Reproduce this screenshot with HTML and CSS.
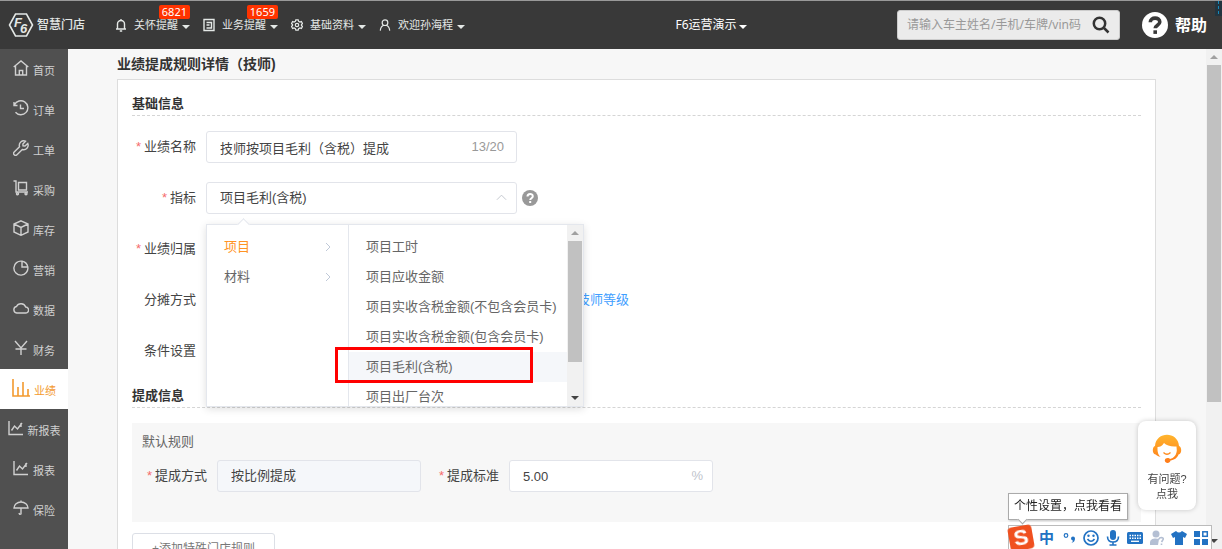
FILE: index.html
```html
<!DOCTYPE html>
<html lang="zh-CN">
<head>
<meta charset="utf-8">
<meta name="viewport" content="width=device-width, initial-scale=1">
<title>业绩提成规则详情</title>
<link rel="stylesheet" href="styles.css">
</head>
<body>
<div class="app">
  <header class="topbar">
    <a class="brand" href="#">
      <svg class="brand-mark" viewBox="0 0 26 26" aria-hidden="true"><path d="M7.500 2H18.500L24.500 13L18.500 24H7.500L1.500 13Z" fill="none" stroke="currentColor" stroke-width="1.600"/><text x="6" y="14.500" class="brand-letter">F</text><text x="12" y="20.500" class="brand-letter">6</text></svg>
      <span>智慧门店</span>
    </a>
    <nav class="topnav">
      <button class="topnav-item" type="button">
        <svg class="icon-bell" viewBox="0 0 12 14"><path d="M1 11H11M2.500 11V6a3.500 3.500 0 0 1 7 0V11M6 2.500V1M4.800 13H7.200"/></svg>
        关怀提醒<i class="caret"></i><span class="badge">6821</span>
      </button>
      <button class="topnav-item" type="button">
        <svg class="icon-note" viewBox="0 0 12 14"><path d="M1 1.500H11V12.500H1ZM3.500 4.500H8.500V10H3.500M3.500 7H6.500"/></svg>
        业务提醒<i class="caret"></i><span class="badge">1659</span>
      </button>
      <button class="topnav-item" type="button">
        <svg class="icon-gear" viewBox="0 0 14 14"><path d="M5.600 1H8.400L8.900 2.700L10.400 3.500L12.100 3L13.400 5.300L12.200 6.500V7.500L13.400 8.700L12.100 11L10.400 10.500L8.900 11.300L8.400 13H5.600L5.100 11.300L3.600 10.500L1.900 11L.6 8.700L1.800 7.500V6.500L.6 5.300L1.900 3L3.600 3.500L5.100 2.700Z"/><circle cx="7" cy="7" r="2"/></svg>
        基础资料<i class="caret"></i>
      </button>
      <button class="topnav-item" type="button">
        <svg class="icon-user" viewBox="0 0 14 14"><circle cx="7" cy="4.300" r="3.300"/><path d="M1.500 13.500Q2 8.500 5.500 7.300M8.500 7.300Q12 8.500 12.500 13.500"/></svg>
        欢迎孙海程<i class="caret"></i>
      </button>
    </nav>
    <button class="store" type="button">F6运营演示<i class="caret"></i></button>
    <form class="search">
      <input type="text" aria-label="搜索" placeholder="请输入车主姓名/手机/车牌/vin码">
      <button type="button" aria-label="查询"><svg viewBox="0 0 18 18"><circle cx="7.500" cy="7.500" r="5.700"/><path d="M12 12L16.500 16.500"/></svg></button>
    </form>
    <a class="help" href="#"><svg viewBox="0 0 26 26" aria-hidden="true"><circle cx="13" cy="13" r="13" fill="#fff"/><path d="M8.300 10.200C8.300 4.800 17.800 4.800 17.800 10C17.800 13 13.200 13.300 13.200 16.200" fill="none" stroke="#393939" stroke-width="3.600"/><rect x="11.400" y="18.300" width="3.600" height="3.600" fill="#393939"/></svg>帮助</a>
    <span class="edge-tab"></span>
  </header>

  <div class="workspace">
    <nav class="sidebar">
      <a href="#"><svg viewBox="0 0 16 16"><path d="M.7 7L8 1L15.300 7M2.500 6V15H13.500V6M6.300 15V10.500H9.700V15"/></svg>首页</a>
      <a href="#"><svg viewBox="0 0 16 16"><path d="M1.500 4.800A7 7 0 1 1 2.500 12.300M1 2V5.500H4.500M7.500 4.500V8.500H11"/></svg>订单</a>
      <a href="#"><svg viewBox="0 0 16 16"><path d="M12.500 1.200A4.500 4.500 0 0 0 6.500 6.700L1.200 12A1.900 1.900 0 0 0 4 14.800L9.300 9.500A4.500 4.500 0 0 0 14.800 3.500L12 6L10 5.800L9.900 4Z"/></svg>工单</a>
      <a href="#"><svg viewBox="0 0 16 16"><path d="M.5 1H3V12H15M5.500 2.500H13.500V10H5.500Z"/><circle cx="4.500" cy="13.700" r="1"/><circle cx="13" cy="13.700" r="1"/></svg>采购</a>
      <a href="#"><svg viewBox="0 0 16 16"><path d="M8 .8L15 4V12L8 15.300L1 12V4ZM1 4L8 7.500L15 4M8 7.500V15"/></svg>库存</a>
      <a href="#"><svg viewBox="0 0 16 16"><path d="M9 1.200V7H14.800A7 7 0 1 1 9 1.200A7 7 0 0 1 14.800 7"/></svg>营销</a>
      <a href="#"><svg viewBox="0 0 16 16"><path d="M3.700 13H12.500A3 3 0 0 0 12.700 7A5 5 0 0 0 3.500 6.500A3.300 3.300 0 0 0 3.700 13Z"/></svg>数据</a>
      <a href="#"><svg viewBox="0 0 16 16"><path d="M2 1L8 8L14 1M8 8V15M2.500 9H13.500"/></svg>财务</a>
      <a href="#" class="active" aria-current="page"><svg class="wide" viewBox="0 0 18 18"><path d="M1 0V17H18M6 17V8M11 17V3M16 17V10"/></svg>业绩</a>
      <a href="#"><svg viewBox="0 0 16 16"><path d="M1 1V14.500H15M3.500 10.500L6.500 6L9.500 9L14 3M13 7V3"/></svg>新报表</a>
      <a href="#"><svg viewBox="0 0 16 16"><path d="M1 1V14.500H15M3.500 10.500L6.500 6L9.500 9L14 3M13 7V3"/></svg>报表</a>
      <a href="#"><svg viewBox="0 0 16 16"><path d="M1 8A7 6 0 0 1 15 8ZM8 2V.5M8 8V14Q6.500 15 6 13"/></svg>保险</a>
    </nav>

    <main class="content">
      <h1>业绩提成规则详情（技师)</h1>
      <section class="card">
        <h2>基础信息</h2>
        <div class="fields">
          <div class="field">
            <label class="required" for="name">业绩名称</label>
            <div class="control"><input id="name" type="text" value="技师按项目毛利（含税）提成"><span class="suffix count">13/20</span></div>
          </div>
          <div class="field">
            <label class="required" for="metric">指标</label>
            <div class="control">
              <select id="metric"><option>项目毛利(含税)</option></select>
              <svg class="suffix chevron" viewBox="0 0 12 8"><path d="M1 7L6 2L11 7"/></svg>
              <div class="cascader">
                <ul class="groups">
                  <li><button type="button" class="chosen">项目<svg viewBox="0 0 6 10"><path d="M1 1L5 5L1 9"/></svg></button></li>
                  <li><button type="button">材料<svg viewBox="0 0 6 10"><path d="M1 1L5 5L1 9"/></svg></button></li>
                </ul>
                <ul class="choices">
                  <li><button type="button">项目工时</button></li>
                  <li><button type="button">项目应收金额</button></li>
                  <li><button type="button">项目实收含税金额(不包含会员卡)</button></li>
                  <li><button type="button">项目实收含税金额(包含会员卡)</button></li>
                  <li><button type="button" class="hovered">项目毛利(含税)</button></li>
                  <li><button type="button">项目出厂台次</button></li>
                </ul>
                <div class="scrollbar"><i class="up"></i><span class="thumb"></span><i class="down"></i></div>
                <span class="marker"></span>
              </div>
            </div>
            <button class="hint" type="button" aria-label="说明"><svg viewBox="0 0 16 16"><circle cx="8" cy="8" r="8" fill="#999"/><path d="M5.500 6.500C5.500 3.200 10.800 3.200 10.800 6.300C10.800 8.200 8.200 8.200 8.200 10" fill="none" stroke="#fff" stroke-width="2"/><rect x="7.200" y="11" width="2" height="2" fill="#fff"/></svg></button>
          </div>
          <div class="field"><span class="label required">业绩归属</span></div>
          <div class="field"><span class="label">分摊方式</span><a class="level-link" href="#">技师等级</a></div>
          <div class="field"><span class="label">条件设置</span></div>
        </div>

        <h2>提成信息</h2>
        <div class="rule">
          <h3>默认规则</h3>
          <div class="rule-row">
            <div class="field">
              <label class="required" for="mode">提成方式</label>
              <div class="control"><select id="mode" disabled><option>按比例提成</option></select></div>
            </div>
            <div class="field">
              <label class="required" for="rate">提成标准</label>
              <div class="control"><input id="rate" type="text" value="5.00"><span class="suffix percent">%</span></div>
            </div>
          </div>
        </div>
        <button class="add" type="button">+添加特殊门店规则</button>
      </section>
    </main>
    <div class="scrollbar page-scroll"><i class="up"></i><span class="thumb"></span><i class="down"></i></div>
  </div>
</div>

<button class="support" type="button">
  <svg viewBox="0 0 30 30" aria-hidden="true"><defs><linearGradient id="hair" x1="0" y1="0" x2="0" y2="1"><stop offset="0" stop-color="#ffb52e"/><stop offset="1" stop-color="#ff7a18"/></linearGradient></defs><path d="M3 12C4 -3 26 -3 27 12C30 13 30 20 26.500 20.500C25.500 24 22 26 18.500 26.500C18 30 12.500 29.500 12.800 26.300C13 23.500 17 23.500 18 25C22 24 24.500 21 24.800 16.500L24.500 12.500C19 13 14.500 11.500 12 9C10 12 8 13 5.500 13V16C5.700 19 6.500 21 8.500 23C5 22 4 20.500 3.500 20.500C0 20 0 13 3 12Z" fill="url(#hair)"/><path d="M11.500 18.500Q15 22 18.500 18.500" fill="none" stroke="#ff8a1c" stroke-width="1.300"/></svg>
  <span>有问题?</span><span>点我</span>
</button>
<div class="ime-tip">个性设置，点我看看</div>
<div class="ime">
  <span class="ime-logo">S</span>
  <span class="ime-lang">中</span>
  <svg viewBox="0 0 16 16"><circle cx="5" cy="5.500" r="1.800" fill="none" stroke="currentColor" stroke-width="1.200"/><path d="M10 8.500a2 2 0 1 1 4 0Q14 12 10.500 13Q12 11.500 11.800 10.500Q10 10 10 8.500Z" fill="currentColor"/></svg>
  <svg viewBox="0 0 16 16"><g fill="none" stroke="currentColor" stroke-width="1.700"><circle cx="8" cy="8" r="7"/><path d="M4.500 9Q8 13.500 11.500 9"/></g><circle cx="5.500" cy="5.700" r="1.200" fill="currentColor"/><circle cx="10.500" cy="5.700" r="1.200" fill="currentColor"/></svg>
  <svg viewBox="0 0 16 16"><rect x="5" y="0" width="6" height="10" rx="3" fill="currentColor"/><path d="M2.500 6.500Q2.500 12 8 12Q13.500 12 13.500 6.500M8 12V15M4.500 15H11.500" fill="none" stroke="currentColor" stroke-width="1.600"/></svg>
  <svg viewBox="0 0 16 16"><rect x="0" y="2" width="16" height="12" rx="1.500" fill="currentColor"/><path d="M2.500 5.500H14M2.500 8.200H14" stroke="#fff" stroke-width="1.400" stroke-dasharray="1.500 1"/><path d="M4 11.300H12" stroke="#fff" stroke-width="1.300"/></svg>
  <svg class="muted" viewBox="0 0 16 16"><circle cx="7" cy="4" r="3.500" fill="currentColor"/><path d="M1 15Q0 8 6.500 8.500L10 9L9 15Z" fill="currentColor"/><path d="M10 9.500Q10 7.500 12.500 7.500Q15.500 8 13.500 10.500L12.500 12M12.500 13.500V15" fill="none" stroke="currentColor" stroke-width="1.600"/></svg>
  <svg viewBox="0 0 16 16"><path d="M5 1Q8 4 11 1L16 4L14 8L12 7V15H4V7L2 8L0 4Z" fill="currentColor"/></svg>
  <svg viewBox="0 0 16 16"><path d="M1 1H7V7H1ZM1 9H7V15H1ZM9 9H15V15H9Z" fill="currentColor"/><rect x="9.800" y="1.800" width="4.500" height="4.500" fill="none" stroke="currentColor" stroke-width="1.500"/></svg>
</div>
</body>
</html>
```

FILE: styles.css
```css
* { box-sizing: border-box; }
body {
  margin: 0;
  overflow: hidden;
  color: #444;
  background: #f7f7f7;
  font: 13px/20px "Liberation Sans", "Noto Sans CJK SC", sans-serif;
}
button, input, select { font: inherit; color: inherit; }
button { border: 0; padding: 0; background: none; text-align: left; }
a { color: inherit; text-decoration: none; }
ul { list-style: none; margin: 0; padding: 0; }
h1, h2, h3 { margin: 0; }
svg { flex: none; }
.app { display: flex; flex-direction: column; height: 100vh; }

/* Top bar */
.topbar {
  position: relative;
  flex: none;
  display: flex;
  align-items: center;
  height: 49px;
  padding: 0 15px 0 8px;
  border-top: 1px solid #999;
  background: #393939;
  color: #e4e8e6;
  font: 11px/16px "Noto Sans", "Noto Sans CJK SC", sans-serif;
}
.brand { display: flex; align-items: center; gap: 3px; width: 107px; font-size: 12px; font-weight: 500; }
.brand-mark { width: 26px; height: 26px; }
.brand-letter { font: italic bold 13px "Liberation Sans", sans-serif; fill: currentColor; }
.topnav { display: flex; gap: 13px; }
.topnav-item { position: relative; display: flex; align-items: center; }
.topnav-item svg { width: 12px; height: 14px; margin-right: 7px; fill: none; stroke: currentColor; stroke-width: 1.4; }
.caret { margin: 3px 0 0 4px; border: 4px solid transparent; border-top-color: currentColor; border-bottom: 0; }
.badge {
  position: absolute;
  right: 0;
  top: -12px;
  padding: 0 3px;
  border-radius: 2px;
  background: #ff3300;
  color: #fff;
  line-height: 14px;
}
.store { display: flex; align-items: center; margin: 0 auto; padding-left: 60px; color: #fff; font-size: 12px; }
.store .caret { margin-left: 2px; }
.search {
  display: flex;
  align-items: center;
  width: 223px;
  height: 30px;
  padding: 0 9px;
  border: 1px solid #ccc;
  border-radius: 3px;
  background: #ebebeb;
}
.search input { flex: 1; min-width: 0; border: 0; padding: 0; background: none; color: #333; font-size: 12px; outline: 0; }
.search input::placeholder { color: #999; }
.search svg { display: block; width: 18px; height: 18px; fill: none; stroke: #333; stroke-width: 2.5; }
.help { display: flex; align-items: center; gap: 7px; margin-left: 22px; color: #fff; font-size: 16px; font-weight: bold; }
.help svg { width: 26px; height: 26px; }
.edge-tab { position: absolute; right: 0; top: 0; width: 7px; height: 15px; background: #233540; }
.edge-tab::after { content: ""; position: absolute; left: 3px; top: 0; height: 13px; border-left: 1px dashed #1688b8; }

/* Side navigation */
.workspace { flex: 1; min-height: 0; display: flex; }
.sidebar { flex: none; width: 68px; background: #505050; color: #d0d0d0; font-size: 11px; }
.sidebar a { display: flex; align-items: center; justify-content: center; gap: 4px; height: 40px; padding-top: 3px; }
.sidebar svg { width: 16px; height: 16px; margin-bottom: 5px; fill: none; stroke: currentColor; stroke-width: 1.4; }
.sidebar .wide { width: 18px; height: 18px; stroke-width: 1.6; }
.sidebar .active { background: #fff; color: #f39a2f; }

/* Form */
.content { flex: 1; min-width: 0; padding: 5px 50px 0 49px; }
.content h1 { color: #333; font-size: 14px; line-height: 20px; margin-bottom: 5px; }
.card { padding: 12px 14px 30px; border: 1px solid #ddd; background: #fff; }
.card h2 { height: 24px; border-bottom: 1px dashed #d5d5d5; color: #333; font-size: 13px; line-height: 24px; }
.fields { display: flex; flex-direction: column; gap: 19px; margin: 15px 0 17px; }
.field { display: flex; align-items: center; min-height: 32px; }
.field label, .label { flex: none; width: 64px; margin-right: 10px; text-align: right; white-space: nowrap; }
.required::before { content: "*"; margin-right: 3px; color: #f56c6c; }
.control { position: relative; width: 311px; }
.control input, .control select {
  display: block;
  width: 100%;
  height: 32px;
  padding: 0 13px;
  border: 1px solid #e2e4ea;
  border-radius: 3px;
  background: #fff;
  appearance: none;
  outline: 0;
  opacity: 1;
}
.control select:disabled { background: #f5f7fa; }
.suffix { position: absolute; right: 13px; top: 6px; color: #999; }
.chevron { right: 10px; top: 11px; width: 11px; height: 8px; fill: none; stroke: #c0c4cc; }
.hint { margin-left: 5px; }
.hint svg { display: block; width: 16px; height: 16px; }
.level-link { margin-left: 371px; color: #409eff; }

/* Cascading menu */
.cascader {
  position: absolute;
  z-index: 2;
  left: 0;
  top: 42px;
  display: flex;
  width: 378px;
  height: 183px;
  border: 1px solid #e4e7ed;
  background: #fff;
  box-shadow: 0 2px 8px rgba(0, 0, 0, .13);
  color: #666;
}
.cascader::before {
  content: "";
  position: absolute;
  left: 32px;
  top: -5px;
  width: 8px;
  height: 8px;
  border: 1px solid #e4e7ed;
  border-width: 1px 0 0 1px;
  background: #fff;
  transform: rotate(45deg);
}
.groups, .choices { padding-top: 7px; overflow: hidden; }
.groups { width: 142px; border-right: 1px solid #e4e7ed; }
.choices { flex: 1; }
.cascader button { display: flex; align-items: center; justify-content: space-between; width: 100%; height: 30px; padding: 0 17px; white-space: nowrap; }
.cascader button svg { width: 6px; height: 10px; fill: none; stroke: #c0c9d8; }
.cascader .chosen { color: #ff9324; }
.cascader .hovered { background: #f5f7fa; }
.marker { position: absolute; left: 128px; top: 122px; width: 198px; height: 36px; border: 3px solid #f00; }

/* Scroll bars */
.scrollbar { flex: none; display: flex; flex-direction: column; align-items: center; width: 16px; padding: 6px 1px; background: #f1f1f1; }
.scrollbar .up { border: 4px solid transparent; border-top: 0; border-bottom-color: #a0a0a0; }
.scrollbar .down { margin-top: auto; border: 4px solid transparent; border-bottom: 0; border-top-color: #444; }
.scrollbar .thumb { width: 100%; height: 121px; margin-top: 6px; background: #c1c1c1; }
.page-scroll .thumb { height: 69%; }

/* Commission rule */
.rule { margin: 15px 0 11px; padding: 9px 10px 30px; background: #f7f7f7; }
.rule h3 { margin-bottom: 8px; color: #666; font-size: 13px; font-weight: normal; line-height: 20px; }
.rule-row { display: flex; gap: 13px; }
.rule .field label { width: 65px; }
.rule .control { width: 204px; }
.percent { right: 10px; color: #c0c4cc; }
.add { height: 32px; padding: 0 19px; border: 1px solid #dcdfe6; border-radius: 3px; color: #777; font-size: 12px; }

/* Floating tools */
.support {
  position: fixed;
  right: 26px;
  bottom: 39px;
  display: flex;
  flex-direction: column;
  align-items: center;
  width: 58px;
  padding: 13px 0 8px;
  border-radius: 8px;
  background: #fff;
  box-shadow: 0 0 5px rgba(0, 0, 0, .2);
  font-size: 11px;
  line-height: 15px;
}
.support svg { width: 30px; height: 30px; margin-bottom: 8px; }
.ime-tip {
  position: fixed;
  right: 94px;
  bottom: 29px;
  padding: 2px 5px;
  border: 1px solid #aaa;
  background: #fff;
  color: #222;
  font-size: 12px;
  line-height: 21px;
  box-shadow: 1px 1px 2px rgba(0, 0, 0, .2);
}
.ime-tip::after {
  content: "";
  position: absolute;
  left: 10px;
  bottom: -4px;
  width: 6px;
  height: 6px;
  border: 1px solid #aaa;
  border-width: 0 1px 1px 0;
  background: #fff;
  transform: rotate(45deg);
}
.ime {
  position: fixed;
  right: 10px;
  bottom: -2px;
  display: flex;
  align-items: center;
  gap: 6px;
  height: 26px;
  padding-right: 2px;
  border: 1px solid #bbb;
  background: #fff;
  color: #2272c3;
}
.ime svg { width: 16px; height: 16px; }
.ime .muted { color: #b4bfd3; }
.ime-logo {
  width: 24px;
  height: 24px;
  border-radius: 4px;
  background: #f0501f;
  color: #fff;
  font-size: 22px;
  font-weight: bold;
  line-height: 24px;
  text-align: center;
  transform: rotate(-10deg);
}
.ime-lang { width: 16px; font-size: 15px; font-weight: bold; }
```
